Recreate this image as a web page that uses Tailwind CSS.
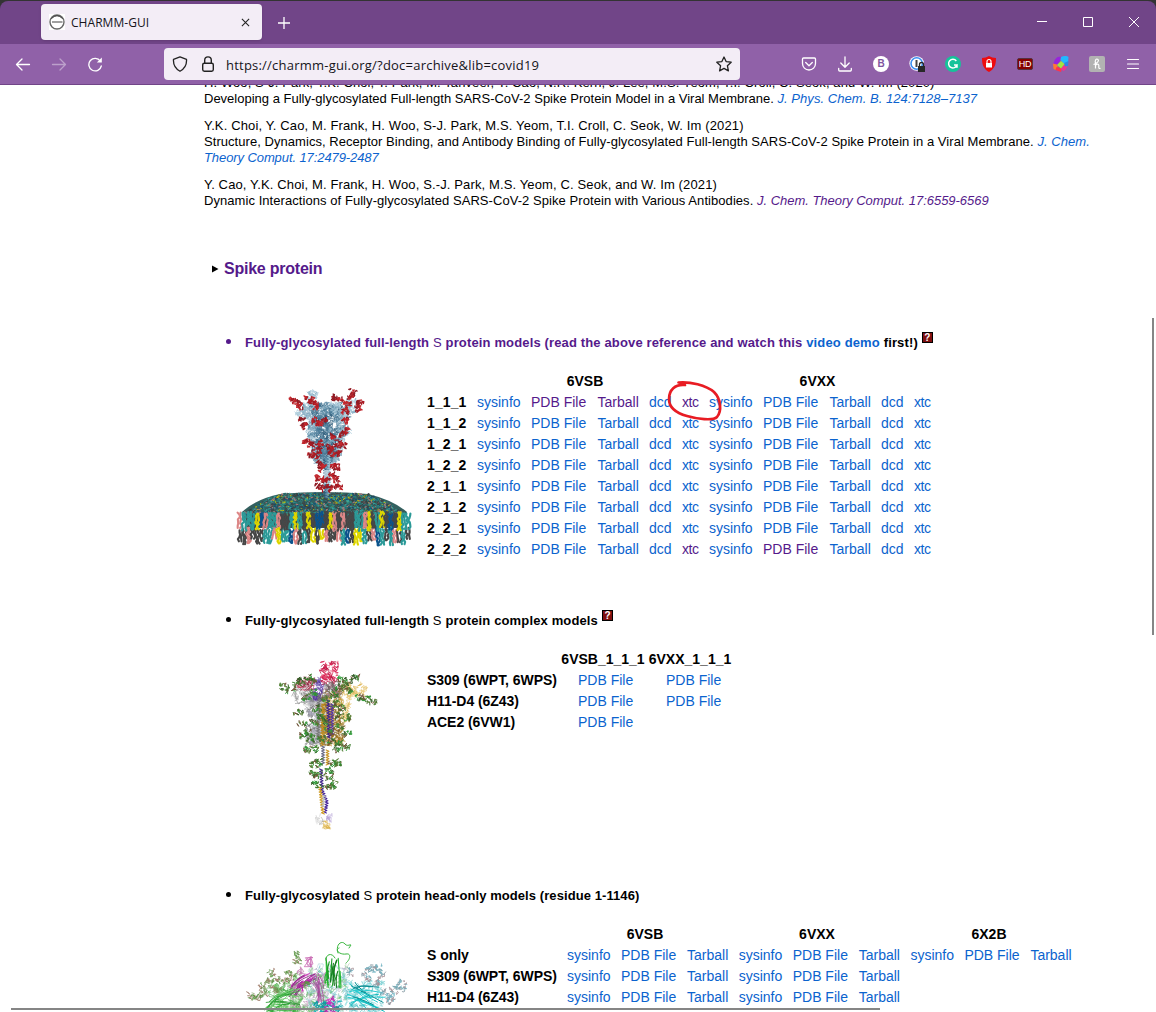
<!DOCTYPE html>
<html lang="en">
<head>
<meta charset="utf-8">
<title>CHARMM-GUI</title>
<script src="https://cdn.jsdelivr.net/npm/@tailwindcss/browser@4"></script>
</head>
<body class="bg-[#333] w-[1156px] h-[1012px] overflow-hidden font-['Liberation_Sans',Arial,sans-serif] text-black">
<div class="flex flex-col h-[1012px] pt-px">
  <!-- title bar -->
  <header class="h-[43px] shrink-0 bg-[#714588] rounded-t-lg flex items-start pt-[3px] pl-[41px]">
    <div class="w-[221px] h-9 rounded bg-[#f3edf6] shadow flex items-center pl-2 pr-[11px] font-['Open_Sans','Noto_Sans',sans-serif]">
      <svg class="w-4 h-4 shrink-0 bg-white" viewBox="0 0 16 16" fill="none"><circle cx="8" cy="8" r="7" stroke="#666" stroke-width="1.4"/><path d="M3 8h10.5" stroke="#777" stroke-width="1.4"/><path d="M2.5 4.5Q8-1 13.5 4.5" stroke="#333"/></svg>
      <span class="ml-[6px] pt-[2px] text-[12px] tracking-[0.05px] text-[#15141a]">CHARMM-GUI</span>
      <svg class="ml-auto mr-px w-[9px] h-[9px]" viewBox="0 0 10 10" stroke="#222" stroke-width="1.2"><path d="M1 1l8 8M9 1L1 9"/></svg>
    </div>
    <svg class="ml-4 mt-[13px] w-3 h-3" viewBox="0 0 12 12" stroke="#fff" stroke-width="1.3"><path d="M6 0v12M0 6h12"/></svg>
    <div class="ml-auto mr-[17px] mt-[13px] flex gap-9 text-white">
      <svg class="w-[10px] h-[10px]" viewBox="0 0 10 10" stroke="currentColor"><path d="M0 4.5h10"/></svg>
      <svg class="w-[10px] h-[10px]" viewBox="0 0 10 10" fill="none" stroke="currentColor"><path d="M.5.5h9v9h-9z"/></svg>
      <svg class="w-[10px] h-[10px]" viewBox="0 0 10 10" stroke="currentColor"><path d="M0 0l10 10M10 0L0 10"/></svg>
    </div>
  </header>
  <!-- navigation bar -->
  <nav class="h-[41px] shrink-0 bg-[#9061a8] border-b border-[#714588] flex items-center pl-[15px] pr-[15px]">
    <div class="flex items-center gap-5 w-[149px]">
      <svg class="w-4 h-4" viewBox="0 0 16 16" fill="none" stroke="#fff" stroke-width="1.3" stroke-linecap="round" stroke-linejoin="round"><path d="M14.5 8.5h-13M7 3L1.5 8.5 7 14"/></svg>
      <svg class="w-4 h-4 opacity-40" viewBox="0 0 16 16" fill="none" stroke="#fff" stroke-width="1.3" stroke-linecap="round" stroke-linejoin="round"><path d="M1.5 8.5h13M9 3l5.500 5.500L9 14"/></svg>
      <svg class="w-4 h-4" viewBox="0 0 16 16" fill="none" stroke="#fff" stroke-width="1.3" stroke-linecap="round"><path d="M13.300 5A6.300 6.300 0 1 0 14.300 10"/><path d="M14.800 1.500v5h-5z" fill="#fff" stroke="none"/></svg>
    </div>
    <div class="w-[576px] h-8 rounded bg-[#f3edf6] flex items-center pl-2 pr-2 text-[#15141a]">
      <svg class="w-4 h-4" viewBox="0 0 16 16" fill="none" stroke="#222" stroke-width="1.3" stroke-linejoin="round"><path d="M8 .8l6.500 2.500c.4 5.200-1.300 9.200-6.500 12C2.800 12.500 1.100 8.500 1.500 3.300z"/></svg>
      <svg class="ml-3 w-4 h-4" viewBox="0 0 16 16" fill="none" stroke="#222" stroke-width="1.4"><rect x="2.700" y="7.200" width="10.600" height="8" rx="1.600"/><path d="M4.700 7V4.200a3.300 3.300 0 0 1 6.600 0V7"/></svg>
      <span class="ml-[10px] pt-[3px] whitespace-nowrap text-[13px] tracking-[0.22px] font-['Open_Sans','Noto_Sans',sans-serif]">https://charmm-gui.org/?doc=archive&amp;lib=covid19</span>
      <svg class="ml-auto w-4 h-4" viewBox="0 0 16 16" fill="none" stroke="#222" stroke-width="1.3" stroke-linejoin="round"><path d="M8 1l2.100 4.600 5.100.6-3.800 3.500 1 5.200L8 12.400l-4.400 2.500 1-5.200L.8 6.200l5.100-.6z"/></svg>
    </div>
    <div class="ml-auto flex gap-5">
      <svg class="w-4 h-4" viewBox="0 0 16 16" fill="none" stroke="#fff" stroke-width="1.3" stroke-linecap="round" stroke-linejoin="round"><path d="M2.500 2h11c.6 0 1 .4 1 1v4.500a6.500 6.500 0 0 1-13 0V3c0-.6.4-1 1-1zM4.700 6.500L8 9.700l3.300-3.200"/></svg>
      <svg class="w-4 h-4" viewBox="0 0 16 16" fill="none" stroke="#fff" stroke-width="1.300" stroke-linecap="round" stroke-linejoin="round"><path d="M8 .8V11M3.800 7L8 11.200 12.200 7M1.700 12.500v1.600c0 .6.4.9 1 .9h10.600c.6 0 1-.3 1-.9v-1.600"/></svg>
      <span class="w-4 h-4 rounded-full bg-white text-[#8055a0] text-[10px] leading-4 font-bold text-center">B</span>
      <svg class="w-4 h-4" viewBox="0 0 16 16"><circle cx="7.700" cy="7.500" r="7.300" fill="#fff"/><circle cx="7.700" cy="7.500" r="5.700" fill="#fff" stroke="#3a8ef2" stroke-width="1.600"/><path d="M7.500 4v7" stroke="#444" stroke-width="2"/><rect x="9" y="10" width="7" height="6" fill="#282828"/><path d="M10.500 10V8.500a2 2 0 0 1 4 0V10" fill="none" stroke="#282828" stroke-width="1.300"/></svg>
      <svg class="w-4 h-4" viewBox="0 0 16 16" fill="none"><circle cx="8" cy="8" r="8" fill="#15c39a"/><path d="M11.300 5A4.300 4.300 0 1 0 12 9H9m3-.2v3" stroke="#fff" stroke-width="1.500"/></svg>
      <svg class="w-4 h-4" viewBox="0 0 16 16"><path d="M8 0c2 1.300 4.500 1.800 7 2 0 6-1 10.500-7 14C2 12.500 1 8 1 2c2.500-.2 5-.7 7-2z" fill="#ed0b0f"/><rect x="5" y="7" width="6" height="4.500" fill="#fff"/><path d="M6 7V5.500a2 2 0 0 1 4 0V7" fill="none" stroke="#fff" stroke-width="1.200"/></svg>
      <span class="w-4 h-3 mt-[2px] rounded-[2px] bg-[#850000] border border-[#54313f] text-white text-[9px] leading-[10px] tracking-[-0.3px] flex justify-center">HD</span>
      <svg class="w-4 h-4" viewBox="0 0 16 16"><path d="M1 6C2 2 5 0 8 1L7 5 4 9 0 8z" fill="#9825dc"/><path d="M8 1c3-1.500 6-1 7.500 0L15 7l-4 1-3.500-4z" fill="#21b9ff"/><path d="M0 7.500l4 1L5 12l-2 2-2.500-1z" fill="#ff7933"/><path d="M3.500 11L9 12l-1 4-5.500-2z" fill="#ff334d"/><path d="M11 8l3.500 0c0 3-1.500 6-4 7L8 13z" fill="#ef3491"/><path d="M11 7l4.500-2-.5 5-3 .5z" fill="#2c86e5"/><path d="M8 5l3.500 3L8 12.500 4 9z" fill="#a2e541"/></svg>
      <svg class="w-4 h-4" viewBox="0 0 16 16" fill="none"><rect width="16" height="16" rx="2" fill="#b2b2b2"/><path d="M6.500 12.500V7M4.500 8.500c3.500-1 6-3.500 4.500-5S5.500 4 6.500 7.500V12.500M6.500 9.500c1-2 3.500-2 3.300.3v1.700c0 1 .8 1.200 1.700.8" stroke="#fff" stroke-width="1.200"/></svg>
      <svg class="w-4 h-4" viewBox="0 0 16 16" stroke="#fff" stroke-width="1.200" stroke-linecap="round"><path d="M2.500 3.500h11M2.500 8h11M2.500 12.500h11"/></svg>
    </div>
  </nav>
  <!-- page viewport -->
  <main class="relative flex-1 overflow-hidden bg-white">
    <div class="-mt-[10px] pl-[204px] text-[13px] leading-4 whitespace-nowrap">
      <div>
        <p class="tracking-[0.09px]">H. Woo, S-J. Park, Y.K. Choi, T. Park, M. Tanveer, Y. Cao, N.R. Kern, J. Lee, M.S. Yeom, T.I. Croll, C. Seok, and W. Im (2020)</p>
        <p>Developing a Fully-glycosylated Full-length SARS-CoV-2 Spike Protein Model in a Viral Membrane. <i class="text-[#0b63ce] tracking-[0.05px]">J. Phys. Chem. B. 124:7128–7137</i></p>
      </div>
      <div class="mt-[11px]">
        <p class="tracking-[0.13px]">Y.K. Choi, Y. Cao, M. Frank, H. Woo, S-J. Park, M.S. Yeom, T.I. Croll, C. Seok, W. Im (2021)</p>
        <p class="tracking-[0.05px]">Structure, Dynamics, Receptor Binding, and Antibody Binding of Fully-glycosylated Full-length SARS-CoV-2 Spike Protein in a Viral Membrane. <i class="text-[#0b63ce]">J. Chem.</i></p>
        <p class="tracking-[-0.09px]"><i class="text-[#0b63ce]">Theory Comput. 17:2479-2487</i></p>
      </div>
      <div class="mt-[11px]">
        <p class="tracking-[0.13px]">Y. Cao, Y.K. Choi, M. Frank, H. Woo, S.-J. Park, M.S. Yeom, C. Seok, and W. Im (2021)</p>
        <p class="tracking-[0.06px]">Dynamic Interactions of Fully-glycosylated SARS-CoV-2 Spike Protein with Various Antibodies. <i class="text-[#551a8b] tracking-[-0.03px]">J. Chem. Theory Comput. 17:6559-6569</i></p>
      </div>
    </div>

    <h2 class="mt-[50px] pl-[212px] h-5 flex items-center text-base font-bold text-[#551a8b] tracking-[-0.23px]">
      <svg class="w-[7px] h-2 mr-[5px]" viewBox="0 0 7 8"><path d="M0 .5l6.500 3.500L0 7.500z" fill="#000"/></svg>Spike protein
    </h2>

    <section class="mt-[54px] h-[278px]">
      <h3 class="h-5 pl-[226px] flex items-center text-[13px] font-bold tracking-[0.145px] text-[#551a8b] whitespace-nowrap">
        <span class="w-[5px] h-[5px] rounded-full bg-[#551a8b] mr-[14px] -mt-[3px]"></span>
        <span>Fully-glycosylated full-length <span class="font-normal">S</span> protein models (read the above reference and watch this <a class="text-[#0b63ce]">video demo</a> <span class="text-black">first!)</span></span>
        <span class="ml-1 -mt-[11px] w-[11px] h-[11px] bg-[#801010] border border-black text-white text-[10px] leading-[9px] text-center font-bold">?</span>
      </h3>
      <div class="flex pl-[230px] pt-[18px]">
        <svg id="membrane" class="w-[197px] h-[190px] shrink-0" viewBox="230 371 197 190"></svg>
        <div id="full" class="text-[14px] leading-[21px] whitespace-nowrap"></div>
      </div>
    </section>

    <section class="h-[275px]">
      <h3 class="h-5 pl-[226px] flex items-center text-[13px] font-bold tracking-[0.14px] whitespace-nowrap">
        <span class="w-[5px] h-[5px] rounded-full bg-black mr-[14px] -mt-[3px]"></span>
        <span>Fully-glycosylated full-length <span class="font-normal">S</span> protein complex models</span>
        <span class="ml-1 -mt-[11px] w-[11px] h-[11px] bg-[#801010] border border-black text-white text-[10px] leading-[9px] text-center font-bold">?</span>
      </h3>
      <div class="flex pl-[230px] pt-[18px]">
        <svg id="complex" class="w-[197px] h-[190px] shrink-0" viewBox="230 649 197 190"></svg>
        <div id="cplx" class="text-[14px] leading-[21px] whitespace-nowrap"></div>
      </div>
    </section>

    <section>
      <h3 class="h-5 pl-[226px] flex items-center text-[13px] font-bold tracking-[0.08px] whitespace-nowrap">
        <span class="w-[5px] h-[5px] rounded-full bg-black mr-[14px] -mt-[3px]"></span>
        <span>Fully-glycosylated <span class="font-normal">S</span> protein head-only models (residue 1-1146)</span>
      </h3>
      <div class="flex pl-[230px] pt-[18px]">
        <svg id="head" class="w-[197px] h-[90px] shrink-0" viewBox="230 924 197 90"></svg>
        <div id="heads" class="text-[14px] leading-[21px] whitespace-nowrap"></div>
      </div>
    </section>

    <!-- pen mark drawn over the first xtc link -->
    <svg class="absolute left-[660px] top-[291px] w-[70px] h-[50px]" viewBox="660 376 70 50" fill="none" stroke="#e81c23" stroke-width="2.700" stroke-linecap="round" stroke-linejoin="round"><path d="M678.500 382.500C690 381.500 706 385 714 392C721 399 722 411 717 417C713 421 697 419 687 416C676 413 669 407 669 399C669 390 675 384 685 385"/></svg>
    <!-- overlay scrollbars -->
    <div class="absolute left-[1152px] top-[233px] w-[2px] h-[317px] bg-[#858585]"></div>
    <div class="absolute left-[11px] top-[923px] w-[869px] h-[2px] bg-[#858585]"></div>
  </main>
</div>
<script>
const LINK = 'text-[#0b63ce]', SEEN = 'text-[#551a8b]';
const cell = (t, w, cls) => `<span class="${cls}" style="width:${w}px">${t}</span>`;
const row = html => `<div class="flex h-[21px]">${html}</div>`;
const head = (t, w) => cell(t, w, 'font-bold text-center');

const names = ['sysinfo', 'PDB File', 'Tarball', 'dcd', 'xtc'];
const widths = [54, 66.500, 51.500, 33, 27];
const seen = { '1_1_1': [1, 2, 4], '2_2_2': [4, 6] };
let out = row(cell('', 50, '') + head('6VSB', 216) + cell('', 16, '') + head('6VXX', 217));
for (const k of ['1_1_1', '1_1_2', '1_2_1', '1_2_2', '2_1_1', '2_1_2', '2_2_1', '2_2_2']) {
  let h = cell(k, 50, 'font-bold tracking-[0.1px]');
  for (let i = 0; i < 10; i++) h += cell(names[i % 5], widths[i % 5], ((seen[k] || []).includes(i) ? SEEN : LINK) + (i % 5 == 4 ? ' tracking-[-0.4px]' : ''));
  out += row(h);
}
document.getElementById('full').innerHTML = out;

out = row(cell('', 133, '') + head('6VSB_1_1_1', 86) + cell('', 1, '') + head('6VXX_1_1_1', 86));
for (const [k, n] of [['S309 (6WPT, 6WPS)', 2], ['H11-D4 (6Z43)', 2], ['ACE2 (6VW1)', 1]])
  out += row(cell(k, 151, 'font-bold tracking-[-0.05px]') + cell('PDB File', 88, LINK).repeat(n));
document.getElementById('cplx').innerHTML = out;

const w3 = [54, 66, 51.700];
out = row(cell('', 140, '') + head('6VSB', 156) + cell('', 16, '') + head('6VXX', 156) + cell('', 16, '') + head('6X2B', 156));
for (const [k, n] of [['S only', 9], ['S309 (6WPT, 6WPS)', 6], ['H11-D4 (6Z43)', 6]]) {
  let h = cell(k, 140, 'font-bold tracking-[-0.05px]');
  for (let i = 0; i < n; i++) h += cell(names[i % 3], w3[i % 3], LINK);
  out += row(h);
}
document.getElementById('heads').innerHTML = out;

// molecular illustrations, drawn from seeded random walks
let s = 90217;
const rnd = () => (s = (s * 16807) % 2147483647) / 2147483647;
const r = (a, b) => a + (b - a) * rnd();
const pick = a => a[Math.floor(rnd() * a.length)];
const line = (d, c, w, o = 1) => `<path d="${d}" fill="none" stroke="${c}" stroke-width="${w}" stroke-opacity="${o}" stroke-linecap="round" stroke-linejoin="round"/>`;
function walk(x, y, rx, ry, n, c, w, o) {
  let d = '';
  for (let i = 0; i < n; i++) d += (i ? 'L' : 'M') + (x + r(-rx, rx)).toFixed(1) + ' ' + (y + r(-ry, ry)).toFixed(1);
  return line(d, c, w, o);
}
function clump(x, y, rx, ry, n, cols, w) {
  let g = '';
  for (let i = 0; i < n; i++) g += walk(x + r(-rx, rx), y + r(-ry, ry), 1.8, 1.8, 4, pick(cols), w);
  return g;
}
const helix = (x1, y1, x2, y2, c) => {
  let d = '', n = Math.round(Math.hypot(x2 - x1, y2 - y1) / 1.3);
  for (let i = 0; i <= n; i++) d += (i ? 'L' : 'M') + (x1 + (x2 - x1) * i / n + (i % 2 ? 1.4 : -1.4)).toFixed(1) + ' ' + (y1 + (y2 - y1) * i / n).toFixed(1);
  return line(d, c, 1.1);
};

let g = '';
// lipid bands, listed left to right: K grey, T teal, B blue, Y yellow, P pink
const band = { K: '#4a4a4a', T: '#2fa19f', B: '#0e5792', Y: '#e6de00', P: '#e58d8d' };
const surf = ['#3c4646', '#444', '#333f42', '#267b7a', '#2a8886', '#2f9492', '#37a3a0', '#124f79', '#b9b812', '#b07878'];
g += '<path d="M280 494Q324 490 368 494Q393 500 407 512L405 518L243 518L242 512Q256 499 280 494Z" fill="#33605f"/><path d="M246 514H403V528H246Z" fill="#3f4a4c"/>';
for (let i = 0; i < 1300; i++) {
  const y = r(493.500, 515), t = (y - 493.500) / 21.500, hw = 42 + 42 * Math.pow(t, .85);
  g += walk(324 + r(-hw, hw), y, 1.300, .9, 3, pick(surf), 1);
}
const lipids = [
  ['KKPKKKTTPYTTBPKTKYKYPKKPTBKYYTKPBTKTPKTK', 529, 542],
  ['PTTTYBPTTPKKTYTKYKBBKYPKPKKTTPYKTYKBKYTT', 513, 528]
];
for (const [seq, y0, y1] of lipids) {
  const step = 168 / (seq.length - 1);
  [...seq].forEach((k, i) => {
    const x = 240 + i * step, top = y0 + r(-1.500, 1.500), bot = y1 + r(-1.500, 4);
    for (const off of [-1.200, 1.200]) {
      let d = '';
      for (let y = top; y <= bot; y += 2.200) d += (d ? 'L' : 'M') + (x + off + r(-1.300, 1.300)).toFixed(1) + ' ' + y.toFixed(1);
      g += line(d, band[k], 2.200) + line(d, '#000', .4, .2);
    }
  });
}
const blues = ['#34627f', '#4a7b98', '#5b8aa5', '#8db2c6', '#b4d0de'];
for (let i = 0; i < 560; i++) {
  const y = r(404, 463), t = (y - 404) / 59, hw = 25 - 14 * t;
  const x = 327 + r(-hw, hw), inner = Math.abs(x - 327) < hw * .7;
  g += walk(x, y, 2.8, 2.8, 5, inner ? pick(blues.slice(0, 4)) : pick(blues.slice(2)), .8, .9);
}
for (const [x, y] of [[313, 395], [301, 413], [352, 403], [343, 413], [346, 432], [309, 405], [335, 407], [350, 409]]) g += clump(x, y, 5, 4, 22, blues.slice(3), .8);
g += helix(325, 460, 325, 498, '#346382') + helix(329, 455, 329, 494, '#93bdd0') + helix(327, 458, 327, 498, '#5d8da8');
g += '<path d="M323.500 470h5v14h-5z" fill="#d7e6ee" opacity=".7"/>';
for (const [x, y] of [[292, 400], [297, 403], [300, 406], [308, 400], [313, 401], [317, 406], [335, 397], [340, 399], [351, 396], [353, 393], [360, 402], [358, 409], [348, 405], [345, 411], [315, 420], [320, 424], [325, 421], [304, 426], [302, 418], [345, 421], [347, 431], [342, 434], [306, 441], [311, 445], [319, 443], [334, 437], [338, 444], [343, 446], [330, 446], [311, 454], [315, 457], [318, 450], [332, 453], [338, 454], [319, 463], [322, 468], [334, 464], [338, 467], [319, 478], [325, 480], [332, 476], [336, 480], [319, 487], [325, 488], [331, 489], [338, 487]])
  g += clump(x, y, 3.100, 2.700, 8, ['#a81c24', '#c2252b', '#8e1c25'], 1.250);
document.getElementById('membrane').innerHTML = g;

g = '';
const grn = ['#3c7d2c', '#2e9a38', '#345d28', '#6f5338', '#557b32'];
const mass = (x0, x1, y0, y1, n, cols, w = .7) => { let o = ''; for (let i = 0; i < n; i++) o += walk(r(x0, x1), r(y0, y1), 3, 3, 4, pick(cols), w, .85); return o; };
g += mass(293, 316, 686, 703, 60, ['#aaa', '#ccc', '#888']);
g += mass(307, 325, 696, 744, 200, ['#8d8d91', '#b6b6bc', '#777', '#a3a3ba']);
g += mass(323, 343, 690, 744, 210, ['#b58419', '#946b17', '#c9a040', '#7c5c1d']);
g += mass(340, 367, 684, 698, 45, ['#e8c873', '#dfb551']);
g += mass(343, 350, 698, 722, 22, ['#e8c873', '#dfb551']);
g += mass(314, 322, 680, 699, 42, ['#4a2896', '#6547a8']);
g += mass(297, 313, 678, 689, 32, ['#bf3656', '#922940']);
g += mass(322, 338, 662, 686, 56, ['#d61a4d', '#b91441', '#e44c70'], .9);
g += mass(324, 341, 684, 698, 50, ['#777', '#888', '#555', '#9b7780']);
g += helix(323, 704, 322, 746, '#c18b18') + helix(328, 700, 329, 738, '#41208b') + helix(332, 704, 332, 735, '#55359e') + helix(319, 695, 318, 740, '#777');
g += helix(323, 746, 323, 764, '#6b6b85') + helix(327.5, 750, 327.5, 765, '#c99523') + helix(321, 769, 322, 790, '#3f238a') + helix(322, 790, 327, 802, '#44239a') + helix(327, 802, 325, 813, '#44239a') + helix(320, 787, 323, 814, '#cf9b20') + helix(324, 795, 323, 807, '#bbb');
g += mass(316, 322, 816, 824, 8, ['#aaa', '#ccc']) + mass(327, 330, 814, 820, 7, ['#b7a4d7']) + mass(324, 330, 821, 828, 10, ['#d9aa3a', '#e2bd61']);
for (const [x, y] of [[284, 687], [291, 690], [297, 684], [307, 677], [302, 681], [312, 681], [341, 680], [355, 677], [348, 682], [350, 691], [339, 687], [345, 686], [366, 699], [360, 698], [372, 702], [314, 692], [334, 695], [326, 699], [307, 697], [299, 713], [302, 724], [308, 732], [304, 735], [311, 739], [307, 749], [314, 749], [343, 707], [339, 715], [347, 717], [340, 728], [347, 735], [340, 742], [338, 749], [345, 747], [320, 717], [330, 731], [335, 704], [318, 708], [326, 722], [315, 722], [322, 738], [332, 742], [318, 762], [314, 764], [332, 763], [337, 762], [312, 774], [318, 774], [330, 771], [329, 777], [317, 784], [335, 785], [327, 786]])
  g += clump(x, y, 4, 3, 10, grn, .9);
document.getElementById('complex').innerHTML = g;

g = '';
const arc = (x1, y1, x2, y2, bend, c, w) => line(`M${x1.toFixed(1)} ${y1.toFixed(1)}Q${((x1 + x2) / 2 + bend).toFixed(1)} ${((y1 + y2) / 2 + bend * .6).toFixed(1)} ${x2.toFixed(1)} ${y2.toFixed(1)}`, c, w);
g += mass(268, 302, 984, 1014, 140, ['#57b552', '#7acb76', '#3c9f3c'], .6);
g += mass(290, 325, 974, 1014, 150, ['#b888ad', '#d68dc6', '#9fb99d', '#5cb65a'], .6);
g += mass(308, 347, 965, 1014, 200, ['#a2cfd6', '#77bfc9', '#9ac69e', '#b2a9c3', '#4cb552'], .6);
g += mass(345, 383, 982, 1014, 120, ['#6ed0d3', '#48bbc0', '#8adce0'], .6);
for (let i = 0; i < 18; i++) g += arc(r(302, 317), r(970, 983), r(288, 304), r(985, 998), -3, pick(['#b91aa5', '#d32cbd', '#92268b']), .9);
for (let i = 0; i < 12; i++) g += arc(r(312, 320), r(972, 984), r(315, 325), r(988, 1004), 3, pick(['#a73898', '#a16ba1']), .7);
for (let i = 0; i < 14; i++) { const x = r(325, 342); g += arc(x, r(957, 972), x + r(-4, 4), r(978, 990), r(-4, 4), pick(['#1d9a27', '#20b62d', '#157b1e']), 1.1); }
for (let i = 0; i < 20; i++) g += arc(r(264, 278), r(996, 1014), r(285, 302), r(988, 1012), -5, pick(['#35b33b', '#1e9428', '#74cd70']), .8);
for (let i = 0; i < 16; i++) g += arc(r(347, 358), r(980, 1008), r(368, 386), r(985, 1014), -7, pick(['#0eb9bd', '#27ccd0', '#098e93']), 1);
g += line('M338 953c-3-9 4-13 7-9s9-3 4 4M339 948c-5 2 1 7 7 6s4 6 0 9M326 961c-1-7 6-9 9-3', '#38b63d', 1);
g += walk(309, 962, 5, 6, 14, '#c96ab3', .8) + walk(302, 971, 5, 5, 12, '#c47db2', .8);
g += mass(312, 340, 1002, 1014, 40, ['#109b9f', '#12b4b8', '#2c8287'], 1);
g += mass(326, 334, 998, 1014, 10, ['#bd1ca8', '#d82cc1'], 1.2);
for (const [x, y] of [[272, 972], [270, 979], [269, 984], [276, 980], [251, 995], [257, 998], [264, 994], [297, 956], [297, 963], [288, 975], [278, 989], [306, 983], [285, 982], [292, 978], [263, 987]]) g += clump(x, y, 3.5, 3.5, 9, ['#629e4b', '#a17f6d', '#5c9146', '#90a879'], .8);
for (const [x, y] of [[366, 972], [372, 969], [378, 968], [381, 974], [369, 979], [350, 972], [375, 983], [390, 996], [394, 991], [400, 984], [403, 987], [390, 1000], [384, 993]]) g += clump(x, y, 3.5, 3.5, 9, ['#6ea6b1', '#a79298', '#75b5c4', '#8b9ca5'], .8);
document.getElementById('head').innerHTML = g;
</script>
</body>
</html>
